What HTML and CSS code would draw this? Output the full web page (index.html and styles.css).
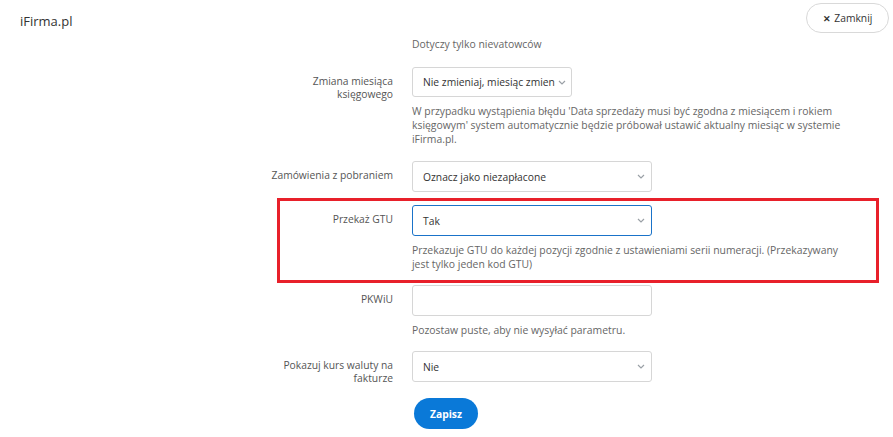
FILE: index.html
```html
<!DOCTYPE html>
<html lang="pl">
<head>
<meta charset="utf-8">
<title>iFirma.pl</title>
<link rel="stylesheet" href="styles.css">
</head>
<body>
<header class="topbar">
  <div class="title">iFirma.pl</div>
  <button class="close-btn" type="button"><span class="x">✕</span> Zamknij</button>
</header>
<main class="form">
  <div class="row row-note">
    <div class="label"></div>
    <div class="control">
      <p class="help help-top">Dotyczy tylko nievatowców</p>
    </div>
  </div>
  <div class="row row-month">
    <div class="label">Zmiana miesiąca<br>księgowego</div>
    <div class="control">
      <div class="select select-short"><span class="value">Nie zmieniaj, miesiąc zmien</span><span class="chev"><svg width="8" height="5" viewBox="0 0 8 5"><path d="M1 1l3 3 3-3" fill="none" stroke="#9aa0a6" stroke-width="1.2"/></svg></span></div>
      <p class="help">W przypadku wystąpienia błędu 'Data sprzedaży musi być zgodna z miesiącem i rokiem księgowym' system automatycznie będzie próbował ustawić aktualny miesiąc w systemie iFirma.pl.</p>
    </div>
  </div>
  <div class="row row-cod">
    <div class="label">Zamówienia z pobraniem</div>
    <div class="control">
      <div class="select"><span class="value">Oznacz jako niezapłacone</span><span class="chev"><svg width="8" height="5" viewBox="0 0 8 5"><path d="M1 1l3 3 3-3" fill="none" stroke="#9aa0a6" stroke-width="1.2"/></svg></span></div>
    </div>
  </div>
  <div class="row row-highlight">
    <div class="label">Przekaż GTU</div>
    <div class="control">
      <div class="select select-focus"><span class="value">Tak</span><span class="chev"><svg width="8" height="5" viewBox="0 0 8 5"><path d="M1 1l3 3 3-3" fill="none" stroke="#9aa0a6" stroke-width="1.2"/></svg></span></div>
      <p class="help">Przekazuje GTU do każdej pozycji zgodnie z ustawieniami serii numeracji. (Przekazywany jest tylko jeden kod GTU)</p>
    </div>
  </div>
  <div class="row">
    <div class="label">PKWiU</div>
    <div class="control">
      <div class="input"></div>
      <p class="help">Pozostaw puste, aby nie wysyłać parametru.</p>
    </div>
  </div>
  <div class="row">
    <div class="label">Pokazuj kurs waluty na<br>fakturze</div>
    <div class="control">
      <div class="select"><span class="value">Nie</span><span class="chev"><svg width="8" height="5" viewBox="0 0 8 5"><path d="M1 1l3 3 3-3" fill="none" stroke="#9aa0a6" stroke-width="1.2"/></svg></span></div>
    </div>
  </div>
  <div class="row row-actions">
    <div class="label"></div>
    <div class="control">
      <button class="save-btn" type="button">Zapisz</button>
    </div>
  </div>
</main>
</body>
</html>
```
FILE: styles.css
```css
* { box-sizing: border-box; }
html, body { margin: 0; padding: 0; background: #fff; }
body {
  font-family: "Open Sans", "Noto Sans", sans-serif;
  font-size: 10.3px;
  color: #555;
  width: 893px;
  height: 437px;
  overflow: hidden;
}
.topbar {
  display: flex;
  justify-content: space-between;
  align-items: flex-start;
  padding: 3px 4px 0 20px;
  height: 37px;
}
.title {
  font-size: 13px;
  color: #333;
  padding-top: 8px;
  line-height: 20px;
}
.close-btn {
  width: 83px;
  height: 30px;
  border: 1px solid #d9d9d9;
  border-radius: 15px;
  background: #fff;
  font-family: inherit;
  font-size: 10.3px;
  color: #333;
  padding: 0;
}
.close-btn .x { font-size: 9px; font-weight: 700; margin-right: 1px; }
.form {
  display: flex;
  flex-direction: column;
  gap: 14px;
}
.row {
  display: grid;
  grid-template-columns: 393px 438px;
  column-gap: 19px;
  position: relative;
}
.row-note { margin-bottom: 2px; }
.row-month { margin-bottom: 1px; }
.row-cod { margin-bottom: -1px; }
.row-actions { margin-top: -1px; }
.label {
  text-align: right;
  line-height: 13px;
  padding-top: 8px;
  color: #555;
}
.control { display: flex; flex-direction: column; align-items: flex-start; }
.help {
  margin: 0;
  font-size: 10.4px;
  line-height: 14px;
  color: #666;
  padding-top: 7px;
}
.help-top { padding-top: 0; }
.select, .input {
  width: 240px;
  height: 31px;
  border: 1px solid #d6d6d6;
  border-radius: 3px;
  display: flex;
  align-items: center;
  justify-content: space-between;
  padding: 0 6px 0 10px;
  color: #333;
  background: #fff;
}
.select-short { width: 160px; height: 30px; padding-right: 5px; }
.select-short .value { overflow: hidden; white-space: nowrap; }
.select-focus { border-color: #1a73c9; }
.chev { display: flex; align-items: center; }
.row-highlight::after {
  content: "";
  position: absolute;
  left: 277px;
  top: -7px;
  width: 596px;
  bottom: -12px;
  border: 3px solid #e8202a;
  pointer-events: none;
}
.save-btn {
  margin-left: 2px;
  width: 64px;
  height: 31px;
  border: none;
  border-radius: 16px;
  background: #0a79d8;
  color: #fff;
  font-family: inherit;
  font-weight: 700;
  font-size: 10.3px;
  padding: 0;
}
```
